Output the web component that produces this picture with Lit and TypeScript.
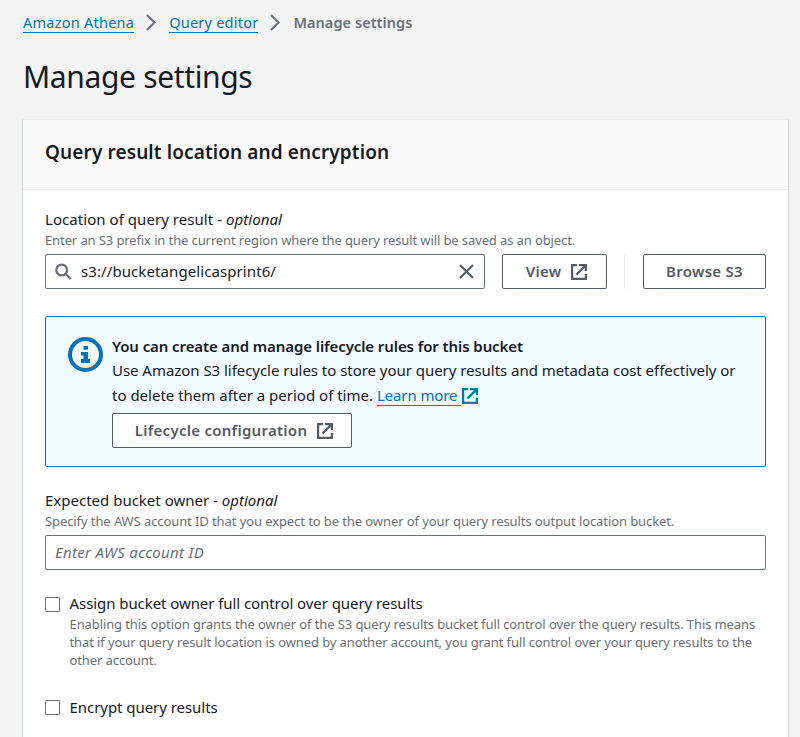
import { LitElement, html, css, svg } from "lit";
import { customElement } from "lit/decorators.js";

const externalIcon = html`<svg class="ext" viewBox="0 0 16 16" width="16" height="16" fill="none" stroke="currentColor" stroke-width="2.2">
  ${svg`<path d="M6 1.1H1.1v13.8h13.8V10M8 1.1h6.9V7M14.9 1.1 5.5 10.5" />`}
</svg>`;

const chevron = html`<svg class="chevron" viewBox="0 0 10 17" width="10" height="17" fill="none" stroke="#687078" stroke-width="2.1">
  ${svg`<path d="M1 1l7.5 7.5L1 16" />`}
</svg>`;

@customElement("app-root")
export class AppRoot extends LitElement {
  static styles = css`
    * { box-sizing: border-box; }
    :host {
      display: block;
      height: 737px;
      overflow: hidden;
      background: #f2f3f3;
      padding: 11px 11px 0 22px;
      color: #16191f;
      font: 15px/22px "Noto Sans", "Open Sans", sans-serif;
      white-space: nowrap;
    }
    svg { display: block; flex: none; }
    .crumbs { display: flex; align-items: center; height: 22px; padding-left: 1px; font-size: 14.5px; }
    .link { color: #0073bb; border-bottom: 1px solid #0073bb; line-height: 20px; height: 21px; text-decoration: none; }
    .crumbs .link { letter-spacing: 0.24px; }
    .chevron { margin: 0 13px 0 12px; }
    .here { color: #687078; font-weight: 600; letter-spacing: 0.06px; }
    h1 { margin: 24px 0 0 1px; font-size: 30px; line-height: 40px; font-weight: 400; letter-spacing: -0.35px; }
    .card { margin-top: 22px; height: 640px; background: #fff; border: 1px solid #d0d5d8; border-top-color: #eaeded; }
    .head { height: 70px; padding: 18px 22px 0; background: #fafafa; border-bottom: 1px solid #eaeded; }
    h2 { margin: 0; font-size: 19px; line-height: 28px; font-weight: 600; letter-spacing: 0.11px; }
    .body { padding: 18px 22px 0; }
    .label { height: 22px; }
    .l1 { letter-spacing: 0.05px; }
    .l3 { letter-spacing: -0.07px; }
    .l4 { letter-spacing: -0.05px; }
    .desc { margin-top: 1px; font-size: 13px; line-height: 18px; color: #687078; letter-spacing: -0.11px; }
    .d2 { letter-spacing: -0.09px; }
    .note { letter-spacing: -0.1px; }
    .row { display: flex; margin-top: 5px; }
    .input { display: flex; align-items: center; height: 35px; border: 1px solid #687078; border-radius: 2px; background: #fff; }
    .search { width: 440px; padding: 0 10px 0 9px; }
    .value { margin-left: 9px; padding-bottom: 2px; flex: 1; letter-spacing: 0.09px; }
    .btn { display: flex; align-items: center; justify-content: center; height: 35px; border: 1px solid #545b64; border-radius: 2px; background: #fff; color: #545b64; font-weight: 600; }
    .btn span { padding-bottom: 2px; letter-spacing: 0.27px; }
    .btn .ext { margin: 0 -4px 0 10px; }
    .view { width: 105px; margin-left: 17px; }
    .divider { width: 1px; background: #eaeded; margin: 0 18px 0 17px; }
    .browse { width: 123px; }
    .alert { display: flex; margin: 27px 0 22px; height: 151px; padding: 18px 22px 0; border: 1px solid #0073bb; border-radius: 2px; background: #f1faff; }
    .info { margin: 2px 9px 0 0; }
    .alert-title { font-weight: 600; letter-spacing: -0.09px; }
    .text { margin-top: 1px; line-height: 25px; letter-spacing: -0.04px; }
    .t2 { height: 25px; letter-spacing: 0; }
    .text .link { display: inline-block; letter-spacing: -0.1px; }
    .text .ext { display: inline-block; color: #0073bb; vertical-align: -3px; margin-left: 1px; }
    .lifecycle { width: 240px; margin-top: 5px; }
    .owner { width: 100%; padding: 0 9px 2px; color: #687078; font-style: italic; letter-spacing: 0.3px; }
    .check { display: flex; margin-top: 22px; }
    .check.last { margin-top: 27px; }
    .box { width: 15px; height: 15px; margin: 5px 9.5px 0 0; border: 1px solid #687078; border-radius: 1px; flex: none; }
    .last .box { margin-top: 4px; }
  `;

  render() {
    return html`
      <nav class="crumbs">
        <a class="link">Amazon Athena</a>${chevron}<a class="link">Query editor</a>${chevron}<span class="here">Manage settings</span>
      </nav>
      <h1>Manage settings</h1>
      <section class="card">
        <header class="head"><h2>Query result location and encryption</h2></header>
        <div class="body">
          <div class="label l1">Location of query result - <i>optional</i></div>
          <div class="desc">Enter an S3 prefix in the current region where the query result will be saved as an object.</div>
          <div class="row">
            <div class="input search">
              <svg viewBox="0 0 17 17" width="17" height="17" fill="none" stroke="#687078" stroke-width="2.3"><circle cx="6.7" cy="7" r="5.4" /><path d="M10.7 11l5 5" /></svg>
              <span class="value">s3://bucketangelicasprint6/</span>
              <svg viewBox="0 0 15 15" width="15" height="15" fill="none" stroke="#545b64" stroke-width="2"><path d="M1 1l13 13M14 1L1 14" /></svg>
            </div>
            <div class="btn view"><span>View</span>${externalIcon}</div>
            <div class="divider"></div>
            <div class="btn browse"><span>Browse S3</span></div>
          </div>
          <div class="alert">
            <svg class="info" viewBox="0 0 35 35" width="35" height="35"><circle cx="17.5" cy="17.5" r="15.5" fill="none" stroke="#0073bb" stroke-width="4" /><path fill="#0073bb" d="M15.5 9H20v3.8h-4.5zM13 15h7v7h2v4h-9v-4h2.5v-3.5H13z" /></svg>
            <div>
              <div class="alert-title">You can create and manage lifecycle rules for this bucket</div>
              <div class="text">
                <div>Use Amazon S3 lifecycle rules to store your query results and metadata cost effectively or</div>
                <div class="t2">to delete them after a period of time. <a class="link">Learn more&nbsp;</a>${externalIcon}</div>
              </div>
              <div class="btn lifecycle"><span>Lifecycle configuration</span>${externalIcon}</div>
            </div>
          </div>
          <div class="label">Expected bucket owner - <i>optional</i></div>
          <div class="desc d2">Specify the AWS account ID that you expect to be the owner of your query results output location bucket.</div>
          <div class="row"><div class="input owner"><span>Enter AWS account ID</span></div></div>
          <div class="check">
            <span class="box"></span>
            <div>
              <div class="label l3">Assign bucket owner full control over query results</div>
              <div class="desc note">
                <div>Enabling this option grants the owner of the S3 query results bucket full control over the query results. This means</div>
                <div>that if your query result location is owned by another account, you grant full control over your query results to the</div>
                <div>other account.</div>
              </div>
            </div>
          </div>
          <div class="check last"><span class="box"></span><div class="label l4">Encrypt query results</div></div>
        </div>
      </section>
    `;
  }
}
